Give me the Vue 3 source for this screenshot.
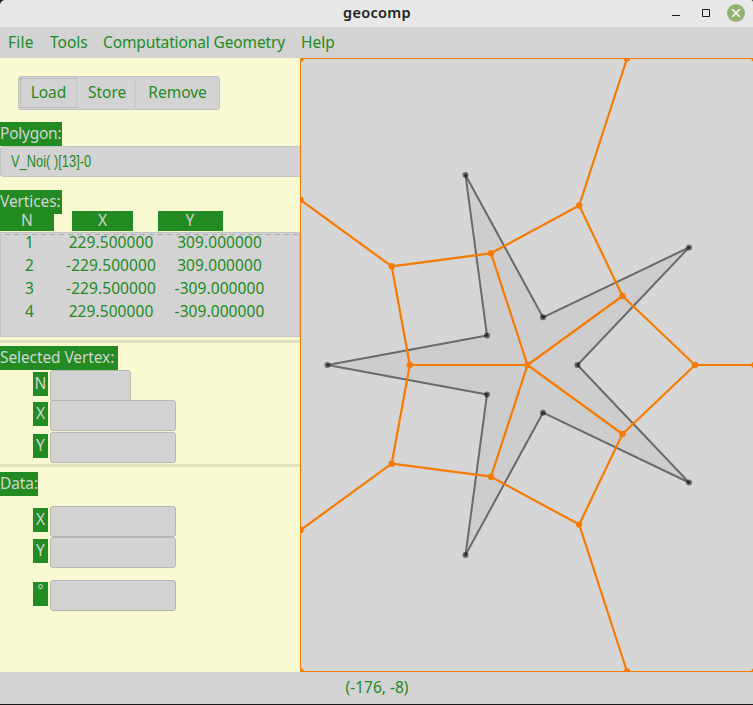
<script setup>
const menus = [
  { label: 'File', cls: 'm-file' },
  { label: 'Tools', cls: 'm-tools' },
  { label: 'Computational Geometry', cls: 'm-geo' },
  { label: 'Help', cls: 'm-help' },
]
const rows = [
  ['1', '229.500000', '309.000000'],
  ['2', '-229.500000', '309.000000'],
  ['3', '-229.500000', '-309.000000'],
  ['4', '229.500000', '-309.000000'],
]

const star = [
  [577.5, 365], [689, 247.5], [543, 317.3], [465.5, 175], [487, 335.5], [327.5, 365],
  [487, 394.5], [465.5, 555], [543, 412.7], [689, 482.5],
]
const starPoints = star.map((p) => p.join(',')).join(' ')

const nodes = [
  [527.5, 365], [409.8, 365], [391.7, 266.3], [491, 253.3], [579.2, 205.5], [622.5, 296],
  [695, 365], [622.5, 434], [579.2, 524.5], [491, 476.7], [391.7, 463.7],
  [300.5, 200], [300.5, 530], [627, 58.5], [627, 671.5], [754.5, 365],
  [300.5, 58.5], [300.5, 671.5], [754.5, 58.5], [754.5, 671.5],
]
const links = [
  [0, 1], [0, 3], [0, 5], [0, 7], [0, 9], [1, 2], [2, 3], [3, 4], [4, 5], [5, 6],
  [6, 7], [7, 8], [8, 9], [9, 10], [10, 1], [2, 11], [10, 12], [4, 13], [8, 14], [6, 15],
]
const edges = links.map(([a, b]) => [...nodes[a], ...nodes[b]])
</script>

<template>
  <div class="window">
    <header class="titlebar">
      <div class="side"></div>
      <h1>geocomp</h1>
      <div class="side controls">
        <svg width="80" height="20" viewBox="0 0 80 20">
          <rect x="6" y="12" width="8" height="1" fill="#1c1c1c" />
          <path d="M36.5 6.5h7v7h-7z" fill="none" stroke="#1c1c1c" />
          <circle cx="70" cy="10" r="9" fill="#92b372" />
          <path d="M66.3 6.3l7.4 7.4M73.7 6.3l-7.4 7.4" stroke="#fff" stroke-width="1.6" />
        </svg>
      </div>
    </header>
    <nav class="menubar">
      <span v-for="m in menus" :key="m.label" :class="m.cls">{{ m.label }}</span>
    </nav>
    <main class="body">
      <aside class="panel">
        <div class="buttons">
          <button class="load"><span>Load</span></button>
          <button class="store">Store</button>
          <button class="remove">Remove</button>
        </div>
        <div class="tag polygon">Polygon:</div>
        <div class="combo"><span>V_Noi( )[13]-0</span></div>
        <div class="tag vertices">Vertices:</div>
        <div class="heads"><b>N</b><b>X</b><b>Y</b></div>
        <div class="list">
          <svg class="dash" width="298" height="1"><path d="M0 .5H298" stroke="#a9a9a9" stroke-dasharray="5 4" stroke-dashoffset="5" /></svg>
          <div v-for="r in rows" :key="r[0]" class="row">
            <span v-for="(c, i) in r" :key="i">{{ c }}</span>
          </div>
        </div>
        <hr />
        <div class="tag selected">Selected Vertex:</div>
        <div class="field first"><label>N</label><input class="short" /></div>
        <div class="field sel-x"><label>X</label><input /></div>
        <div class="field sel-y"><label>Y</label><input /></div>
        <hr class="second" />
        <div class="tag data">Data:</div>
        <div class="field data-x"><label>X</label><input /></div>
        <div class="field"><label>Y</label><input /></div>
        <div class="field angle"><label>°</label><input /></div>
      </aside>
      <svg class="canvas" width="453" height="614" viewBox="300 58 453 614">
        <polygon :points="starPoints" fill="#cdcdcd" stroke="#6b6b6b" stroke-width="2" stroke-linejoin="round" />
        <g v-for="(p, i) in star" :key="'s' + i">
          <circle :cx="p[0]" :cy="p[1]" r="3" fill="#000" fill-opacity=".5" />
          <circle :cx="p[0]" :cy="p[1]" r="1.2" fill="#000" fill-opacity=".3" />
        </g>
        <path d="M300.5 671.5V58.5H754M300.5 671.5H754" fill="none" stroke="#f57c00" />
        <line v-for="(e, i) in edges" :key="'e' + i" :x1="e[0]" :y1="e[1]" :x2="e[2]" :y2="e[3]" stroke="#f57c00" stroke-width="2.2" />
        <circle v-for="(p, i) in nodes" :key="'n' + i" :cx="p[0]" :cy="p[1]" r="3.2" fill="#f57c00" />
      </svg>
    </main>
    <footer class="status"><span>(-176, -8)</span></footer>
  </div>
</template>

<style>
body { margin: 0; background: #171717; overflow: hidden; }
</style>

<style scoped>
* { box-sizing: border-box; }
.window {
  width: 753px;
  height: 705px;
  display: flex;
  flex-direction: column;
  border-bottom: 1px solid #171717;
  font: 15.5px/24px "Noto Sans", sans-serif;
  color: #228b22;
  white-space: nowrap;
}
.titlebar { height: 27px; flex: none; display: flex; padding-left: 1px; background: #e8e8e8; border-radius: 5px 2px 0 0; }
.side { flex: 1 1 0; min-width: 0; }
.titlebar h1 { margin: 0; width: 70px; text-align: center; font-size: 14.5px; line-height: 24px; font-weight: 600; letter-spacing: .3px; color: #222; }
.controls { display: flex; justify-content: flex-end; }
.controls svg { margin: 3px 7px 0 0; }
.menubar { height: 31px; flex: none; display: flex; background: #d3d3d3; padding-left: 8px; line-height: 30px; }
.m-file { width: 42px; letter-spacing: .2px; }
.m-tools { width: 53px; }
.m-geo { width: 198px; letter-spacing: -.13px; }
.body { height: 614px; flex: none; display: flex; }
.panel { width: 300px; background: #fafad2; overflow: hidden; display: flex; flex-direction: column; align-items: flex-start; padding-top: 18px; }
.panel > * { flex: none; }
.canvas { display: block; background: #d6d6d6; }
.buttons { display: flex; width: 202px; height: 34px; margin-left: 18px; border: 1px solid #c2c2c2; border-radius: 3px; background: #d3d3d3; padding: 1px; }
.buttons button { border: 0; padding: 0 0 2px; background: none; color: inherit; font: inherit; line-height: 28px; }
.buttons .load { width: 56px; padding: 0; }
.load span { display: block; width: 56px; height: 30px; line-height: 26px; border: 1px dotted #aaa; border-right: 0; text-indent: 0; }
.buttons .store { width: 60px; border-left: 1px solid #c6c6c6; text-indent: 2px; }
.buttons .remove { width: 84px; border-left: 1px solid #c6c6c6; text-indent: 1px; }
.tag { height: 24px; line-height: 22px; background: #228b22; color: #d3d3d3; overflow: hidden; }
.polygon { width: 62px; margin-top: 12px; letter-spacing: -.25px; }
.combo { width: 304px; height: 31px; background: #d3d3d3; border: 1px solid #c3c3c3; border-radius: 3px; padding-left: 10px; line-height: 30px; font-family: "Liberation Sans", sans-serif; font-size: 16px; }
.combo span { display: inline-block; transform: scaleX(.805); transform-origin: left; }
.vertices { width: 62px; height: 21px; margin-top: 13px; letter-spacing: -.1px; box-shadow: 0 3px #228b22; }
.heads { display: grid; grid-template-columns: 54px 61px 65px; column-gap: 18px; width: 223px; }
.heads b { height: 20px; line-height: 18px; font-weight: 400; text-align: center; color: #d3d3d3; background: #228b22; }
.heads b:last-child { margin-left: 7px; margin-right: -7px; text-indent: -1px; }
.list { width: 300px; height: 105px; margin-top: 1px; border: 1px solid #c3c3c3; background: #d3d3d3; overflow: hidden; padding-top: 1px; }
.dash { display: block; }
.row { display: grid; grid-template-columns: 57px 106px 111px; height: 23px; line-height: 23px; text-align: center; letter-spacing: .08px; position: relative; top: -4px; }
hr { width: 300px; height: 3px; margin: 3px 0; border: 0; background: #e1e1bd; }
.selected { width: 118px; letter-spacing: -.1px; }
.field { display: flex; height: 31px; padding-left: 33px; gap: 2px; }
label { width: 15px; height: 24px; margin-top: 2px; line-height: 22px; text-align: center; color: #d3d3d3; background: #228b22; }
input { width: 126px; height: 31px; padding: 0; border: 1px solid #b6b6b6; border-radius: 3px; background: #d3d3d3; outline: 0; }
.short { width: 81px; }
.sel-x { margin-top: -1px; }
.sel-y { margin-top: 1px; }
.second { margin: 1px 0 5px; }
.data { width: 38px; letter-spacing: -.1px; }
.data-x { margin-top: 10px; }
.angle { margin-top: 12px; }
.angle label { font-size: 14px; line-height: 16px; }
.status { height: 32px; background: #d3d3d3; text-align: center; line-height: 30px; text-indent: 1px; }
</style>
